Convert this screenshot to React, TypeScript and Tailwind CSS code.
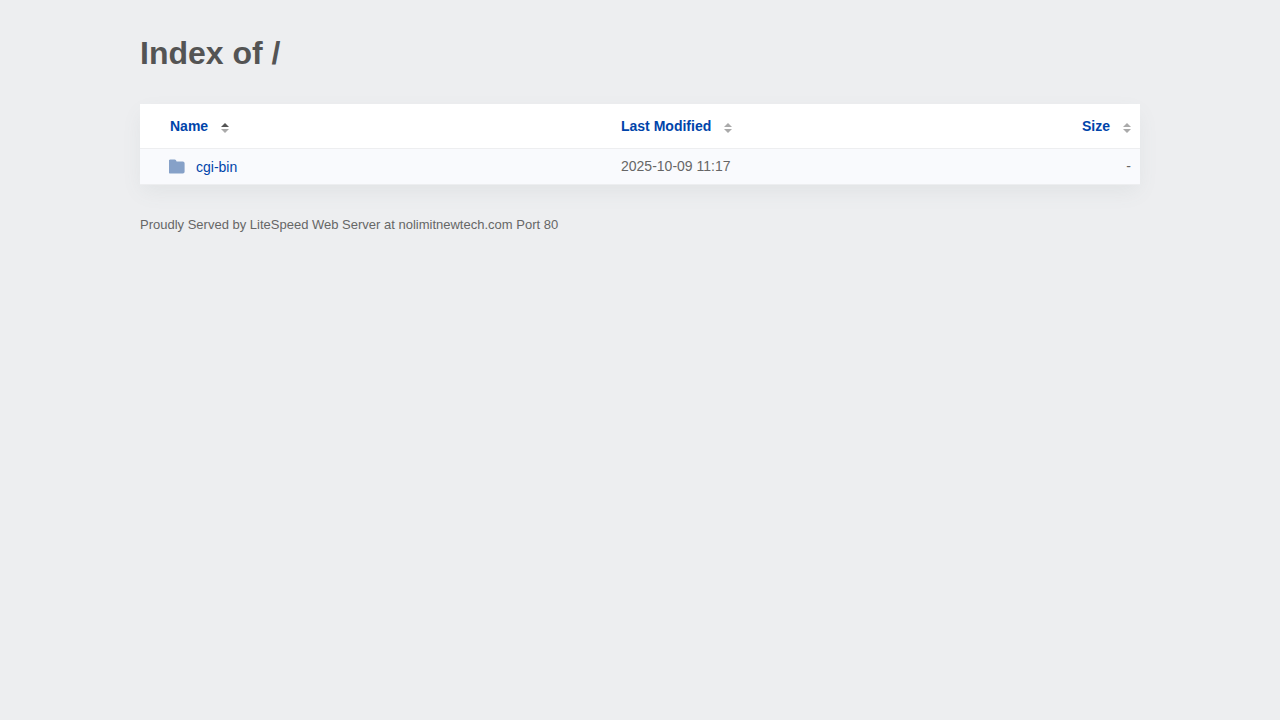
import clsx from 'clsx';

interface Entry {
  name: string;
  href: string;
  modified: string;
  size: string;
}

const entries: Entry[] = [
  { name: 'cgi-bin', href: '/cgi-bin/', modified: '2025-10-09 11:17', size: '-' },
];

function SortArrows({ active = false }: { active?: boolean }) {
  return (
    <svg className="mt-1 h-3 w-2" viewBox="0 0 8 12" aria-hidden="true">
      <path d="M0 5 L4 1 L8 5 Z" className={clsx(active ? 'fill-[#555]' : 'fill-[#aaa]')} />
      <path d="M0 7 L4 11 L8 7 Z" className="fill-[#aaa]" />
    </svg>
  );
}

function FolderIcon() {
  return (
    <svg className="size-4" viewBox="0 0 16 16" aria-hidden="true">
      <path
        d="M1.8 .4 H5.6 Q6.6 .4 7 1.2 L7.6 2.4 H13.8 Q15.6 2.4 15.6 4.2 V12.8 Q15.6 14.6 13.8 14.6 H1.4 Q-.4 14.6 -.4 12.8 V2.2 Q-.4 .4 1.4 .4 Z"
        className="fill-[#86a1c8]"
      />
    </svg>
  );
}

function SortButton({ label, active }: { label: string; active?: boolean }) {
  return (
    <button type="button" className="inline-flex cursor-pointer items-center gap-[13px] font-bold text-[#04a]">
      {label}
      <SortArrows active={active} />
    </button>
  );
}

export default function App() {
  return (
    <div className="min-h-screen bg-[#edeef0] px-5 py-8 font-['Liberation_Sans',Arial,sans-serif] text-[#666]">
      <main className="mx-auto max-w-[1000px]">
        <h1 className="mb-[30px] text-[32px] leading-[42px] font-bold text-[#545454]">Index of /</h1>

        <table className="w-full table-fixed border-collapse bg-white text-left text-[14px] leading-5 shadow-[0_8px_20px_-2px_rgba(95,125,125,0.09)]">
          <thead>
            <tr className="h-11">
              <th className="w-[472px] pl-[30px]">
                <SortButton label="Name" active />
              </th>
              <th className="pl-[9px]">
                <SortButton label="Last Modified" />
              </th>
              <th className="w-[120px] pr-[9px] text-right">
                <SortButton label="Size" />
              </th>
            </tr>
          </thead>
          <tbody>
            {entries.map((entry) => (
              <tr key={entry.href} className="h-9 border-y border-[#edeef0] bg-[#f9fafd]">
                <td className="pt-px pl-[29px]">
                  <a href={entry.href} className="flex items-center gap-[11px] text-[#04a]">
                    <FolderIcon />
                    {entry.name}
                  </a>
                </td>
                <td className="pl-[9px]">{entry.modified}</td>
                <td className="pr-[9px] text-right">{entry.size}</td>
              </tr>
            ))}
          </tbody>
        </table>

        <footer className="mt-8 text-[13px] leading-4">
          Proudly Served by LiteSpeed Web Server at nolimitnewtech.com Port 80
        </footer>
      </main>
    </div>
  );
}
